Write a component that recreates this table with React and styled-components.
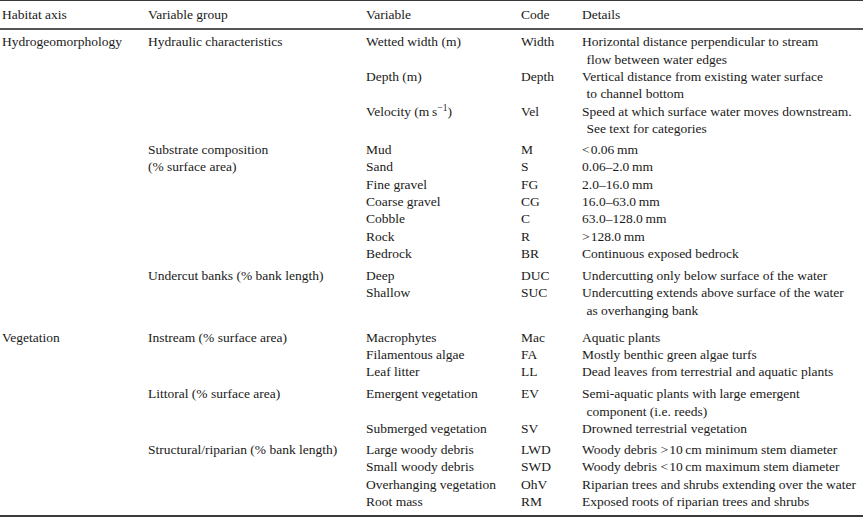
import React from 'react';
import styled, { createGlobalStyle } from 'styled-components';

const GlobalStyle = createGlobalStyle`
  html, body {
    margin: 0;
    padding: 0;
    background: #ffffff;
  }
  body {
    font-family: "Liberation Serif", "Times New Roman", serif;
    color: #1a1a1a;
  }
`;

const Table = styled.table`
  width: 863px;
  border-spacing: 0;
  border-collapse: separate;
  border-top: 1px solid #3a3a3a;
  border-bottom: 2px solid #3a3a3a;
  font-size: 13.5px;
  line-height: 17.35px;
  table-layout: fixed;
`;

const HeadCell = styled.th`
  text-align: left;
  font-weight: normal;
  padding: 5px 0 4.6px ${(p) => (p.$first ? '2px' : '0')};
  border-bottom: 2px solid #555;
  white-space: nowrap;
`;

const Cell = styled.td`
  vertical-align: top;
  padding: ${(p) => p.$top}px 0 ${(p) => p.$bottom || 0}px ${(p) => (p.$first ? '2px' : '0')};
  white-space: nowrap;
`;

const Line = styled.span`
  display: block;
  padding-left: ${(p) => (p.$cont ? '4.5px' : '0')};
`;

const Sup = styled.sup`
  font-size: 9.5px;
  line-height: 0;
  vertical-align: 5px;
`;

const rows = [
  { top: 3.3, axis: { text: 'Hydrogeomorphology', span: 12 }, group: { text: ['Hydraulic characteristics'], span: 3 }, variable: 'Wetted width (m)', code: 'Width', details: ['Horizontal distance perpendicular to stream', 'flow between water edges'] },
  { top: 0, variable: 'Depth (m)', code: 'Depth', details: ['Vertical distance from existing water surface', 'to channel bottom'] },
  { top: 0, variable: <>Velocity (m{'\u2009'}s<Sup>−1</Sup>)</>, code: 'Vel', details: ['Speed at which surface water moves downstream.', 'See text for categories'] },
  { top: 3.65, group: { text: ['Substrate composition', '(% surface area)'], span: 7 }, variable: 'Mud', code: 'M', details: ['<\u200a0.06\u2009mm'] },
  { top: 0, variable: 'Sand', code: 'S', details: ['0.06–2.0\u2009mm'] },
  { top: 0, variable: 'Fine gravel', code: 'FG', details: ['2.0–16.0\u2009mm'] },
  { top: 0, variable: 'Coarse gravel', code: 'CG', details: ['16.0–63.0\u2009mm'] },
  { top: 0, variable: 'Cobble', code: 'C', details: ['63.0–128.0\u2009mm'] },
  { top: 0, variable: 'Rock', code: 'R', details: ['>\u200a128.0\u2009mm'] },
  { top: 0, variable: 'Bedrock', code: 'BR', details: ['Continuous exposed bedrock'] },
  { top: 4.65, group: { text: ['Undercut banks (% bank length)'], span: 2 }, variable: 'Deep', code: 'DUC', details: ['Undercutting only below surface of the water'] },
  { top: 0, variable: 'Shallow', code: 'SUC', details: ['Undercutting extends above surface of the water', 'as overhanging bank'] },
  { top: 9.65, axis: { text: 'Vegetation', span: 9 }, group: { text: ['Instream (% surface area)'], span: 3 }, variable: 'Macrophytes', code: 'Mac', details: ['Aquatic plants'] },
  { top: 0, variable: 'Filamentous algae', code: 'FA', details: ['Mostly benthic green algae turfs'] },
  { top: 0, variable: 'Leaf litter', code: 'LL', details: ['Dead leaves from terrestrial and aquatic plants'] },
  { top: 4.65, group: { text: ['Littoral (% surface area)'], span: 2 }, variable: 'Emergent vegetation', code: 'EV', details: ['Semi-aquatic plants with large emergent', 'component (i.e. reeds)'] },
  { top: 0, variable: 'Submerged vegetation', code: 'SV', details: ['Drowned terrestrial vegetation'] },
  { top: 3.65, group: { text: ['Structural/riparian (% bank length)'], span: 4 }, variable: 'Large woody debris', code: 'LWD', details: ['Woody debris >\u200a10\u2009cm minimum stem diameter'] },
  { top: 0, variable: 'Small woody debris', code: 'SWD', details: ['Woody debris <\u200a10\u2009cm maximum stem diameter'] },
  { top: 0, variable: 'Overhanging vegetation', code: 'OhV', details: ['Riparian trees and shrubs extending over the water'] },
  { top: 0, bottom: 4.5, variable: 'Root mass', code: 'RM', details: ['Exposed roots of riparian trees and shrubs'] },
];

const App = () => (
  <>
    <GlobalStyle />
    <Table>
      <colgroup>
        <col style={{ width: 148 }} />
        <col style={{ width: 218 }} />
        <col style={{ width: 155 }} />
        <col style={{ width: 61 }} />
        <col />
      </colgroup>
      <thead>
        <tr>
          <HeadCell $first>Habitat axis</HeadCell>
          <HeadCell>Variable group</HeadCell>
          <HeadCell>Variable</HeadCell>
          <HeadCell>Code</HeadCell>
          <HeadCell>Details</HeadCell>
        </tr>
      </thead>
      <tbody>
        {rows.map((r, i) => (
          <tr key={i}>
            {r.axis && (
              <Cell $first $top={r.top} rowSpan={r.axis.span}>
                {r.axis.text}
              </Cell>
            )}
            {r.group && (
              <Cell $top={r.top} rowSpan={r.group.span}>
                {r.group.text.map((t) => (
                  <Line key={t}>{t}</Line>
                ))}
              </Cell>
            )}
            <Cell $top={r.top} $bottom={r.bottom}>{r.variable}</Cell>
            <Cell $top={r.top} $bottom={r.bottom}>{r.code}</Cell>
            <Cell $top={r.top} $bottom={r.bottom}>
              {r.details.map((d, j) => (
                <Line key={j} $cont={j > 0}>
                  {d}
                </Line>
              ))}
            </Cell>
          </tr>
        ))}
      </tbody>
    </Table>
  </>
);

export default App;
